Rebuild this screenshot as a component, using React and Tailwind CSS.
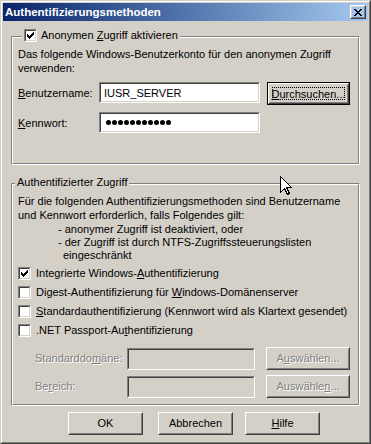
import React from "react";

function Check({ checked }) {
  return (
    <div className="w-[13px] h-[13px] shrink-0 border border-t-[#808080] border-l-[#808080] border-r-white border-b-white">
      <div className="w-full h-full border border-t-[#404040] border-l-[#404040] border-r-[#d4d0c8] border-b-[#d4d0c8] bg-white relative">
        {checked && (
          <svg width="7" height="7" viewBox="0 0 7 7" className="absolute left-[1px] top-[1px]" shapeRendering="crispEdges">
            <rect x="6" y="0" width="1" height="1" fill="#000" />
            <rect x="5" y="1" width="2" height="1" fill="#000" />
            <rect x="0" y="2" width="1" height="1" fill="#000" />
            <rect x="4" y="2" width="3" height="1" fill="#000" />
            <rect x="0" y="3" width="2" height="1" fill="#000" />
            <rect x="3" y="3" width="3" height="1" fill="#000" />
            <rect x="0" y="4" width="5" height="1" fill="#000" />
            <rect x="1" y="5" width="3" height="1" fill="#000" />
            <rect x="2" y="6" width="1" height="1" fill="#000" />
          </svg>
        )}
      </div>
    </div>
  );
}

function Field({ className = "", disabled, children }) {
  return (
    <div className={"border border-t-[#808080] border-l-[#808080] border-r-white border-b-white " + className}>
      <div className={"w-full h-full border border-t-[#404040] border-l-[#404040] border-r-[#d4d0c8] border-b-[#d4d0c8] flex items-center pl-[3px] " + (disabled ? "bg-[#d4d0c8]" : "bg-white")}>
        {children}
      </div>
    </div>
  );
}

function Btn({ className = "", disabled, children }) {
  return (
    <div className={"border border-t-white border-l-white border-r-[#404040] border-b-[#404040] " + className}>
      <div className={"w-full h-full border border-t-[#d4d0c8] border-l-[#d4d0c8] border-r-[#808080] border-b-[#808080] flex items-center justify-center " + (disabled ? "text-[#808080] [text-shadow:1px_1px_0_#fff]" : "")}>
        {children}
      </div>
    </div>
  );
}

function DefBtn({ className = "", children }) {
  return (
    <div className={"border border-black " + className}>
      <div className="w-full h-full border border-t-white border-l-white border-r-[#404040] border-b-[#404040]">
        <div className="w-full h-full border border-t-[#d4d0c8] border-l-[#d4d0c8] border-r-[#808080] border-b-[#808080] p-[2px]">
          <div className="w-full h-full border border-dotted border-black flex items-center justify-center">
            {children}
          </div>
        </div>
      </div>
    </div>
  );
}

function Group({ className = "", label, labelClass = "", children }) {
  return (
    <div className={"relative border border-t-[#808080] border-l-[#808080] border-r-white border-b-white " + className}>
      <div className="w-full h-full border border-t-white border-l-white border-r-[#808080] border-b-[#808080]">
        {children}
      </div>
      <div className={"absolute top-[-8px] h-[13px] bg-[#d4d0c8] flex items-center " + labelClass}>{label}</div>
    </div>
  );
}

function CheckRow({ checked, children, className = "" }) {
  return (
    <div className={"flex items-center h-[13px] " + className}>
      <Check checked={checked} />
      <span className="ml-[5px] whitespace-nowrap">{children}</span>
    </div>
  );
}

function Cursor() {
  return (
    <svg width="12" height="19" viewBox="0 0 12 19" className="absolute left-[280px] top-[176px]" shapeRendering="crispEdges">
      <path d="M0.5 0.5 L0.5 16.5 L4.5 12.5 L7.5 18.5 L9.5 17.5 L6.5 11.5 L11.5 11.5 Z" fill="#fff" stroke="#000" strokeWidth="1" />
    </svg>
  );
}

export default function App() {
  return (
    <div className="w-[371px] h-[444px] bg-[#d4d0c8] relative font-['Liberation_Sans',Arial,sans-serif] text-[11px] text-black leading-[13px] select-none">
      <div className="w-full h-full border border-t-[#d4d0c8] border-l-[#d4d0c8] border-r-[#404040] border-b-[#404040]">
        <div className="w-full h-full border border-t-white border-l-white border-r-[#808080] border-b-[#808080] p-px flex flex-col">
          {/* Title bar */}
          <div className="h-[18px] shrink-0 bg-linear-to-r from-[#0a246a] to-[#a6caf0] flex items-center justify-between pl-[2px] pr-[2px]">
            <span className="text-white font-bold text-[11.5px]">Authentifizierungsmethoden</span>
            <Btn className="w-[16px] h-[14px]">
              <svg width="8" height="7" viewBox="0 0 8 7" shapeRendering="crispEdges">
                <path d="M0 0h2v1h-2z M6 0h2v1h-2z M1 1h2v1h-2z M5 1h2v1h-2z M2 2h4v1h-4z M3 3h2v1h-2z M2 4h4v1h-4z M1 5h2v1h-2z M5 5h2v1h-2z M0 6h2v1h-2z M6 6h2v1h-2z" fill="#000" />
              </svg>
            </Btn>
          </div>

          <div className="px-[8px] pt-[15px] flex flex-col">
            {/* Group 1 */}
            <Group
              className="h-[129px]"
              labelClass="left-[10px] px-[2px]"
              label={
                <>
                  <Check checked />
                  <span className="ml-[4px] whitespace-nowrap">Anonymen <u>Z</u>ugriff aktivieren</span>
                </>
              }
            >
              <div className="pl-[5px] pt-[9px] leading-[14px]">
                <p>Das folgende Windows-Benutzerkonto für den anonymen Zugriff<br />verwenden:</p>
                <div className="flex items-start mt-[7px]">
                  <span className="w-[81px] h-[21px] flex items-center"><u>B</u>enutzername:</span>
                  <Field className="w-[161px] h-[21px]">IUSR_SERVER</Field>
                  <DefBtn className="ml-[7px] w-[83px] h-[23px]"><span><u>D</u>urchsuchen...</span></DefBtn>
                </div>
                <div className="flex items-start mt-[7px]">
                  <span className="w-[81px] h-[21px] flex items-center"><u>K</u>ennwort:</span>
                  <Field className="w-[161px] h-[21px]">
                    <div className="flex gap-[1px] pl-[2px]">
                      {Array.from({ length: 11 }).map((_, i) => (
                        <div key={i} className="w-[5px] h-[5px] rounded-full bg-black" />
                      ))}
                    </div>
                  </Field>
                </div>
              </div>
            </Group>

            {/* Group 2 */}
            <Group
              className="h-[223px] mt-[18px]"
              labelClass="left-[3px] px-[2px]"
              label={<span className="whitespace-nowrap">Authentifizierter Zugriff</span>}
            >
              <div className="pl-[5px] pt-[9px]">
                <p className="leading-[14px]">Für die folgenden Authentifizierungsmethoden sind Benutzername<br />und Kennwort erforderlich, falls Folgendes gilt:</p>
                <div className="pl-[40px] leading-[13px] mt-[1px]">
                  <p>- anonymer Zugriff ist deaktiviert, oder</p>
                  <p>- der Zugriff ist durch NTFS-Zugriffssteuerungslisten</p>
                  <p className="pl-[5px]">eingeschränkt</p>
                </div>
                <div className="flex flex-col gap-[6px] mt-[5px]">
                  <CheckRow checked>Integrierte Windows-<u>A</u>uthentifizierung</CheckRow>
                  <CheckRow>Digest-Authentifizierung für <u>W</u>indows-Domänenserver</CheckRow>
                  <CheckRow><u>S</u>tandardauthentifizierung (Kennwort wird als Klartext gesendet)</CheckRow>
                  <CheckRow>.NET Passport-Au<u>t</u>hentifizierung</CheckRow>
                </div>
                <div className="flex items-center mt-[10px] pl-[17px]">
                  <span className="w-[92px] text-[#808080] [text-shadow:1px_1px_0_#fff]">Standarddo<u>m</u>äne:</span>
                  <Field disabled className="w-[128px] h-[22px]" />
                  <Btn disabled className="ml-[11px] w-[84px] h-[23px]"><span>A<u>u</u>swählen...</span></Btn>
                </div>
                <div className="flex items-center mt-[5px] pl-[17px]">
                  <span className="w-[92px] text-[#808080] [text-shadow:1px_1px_0_#fff]">Be<u>r</u>eich:</span>
                  <Field disabled className="w-[128px] h-[22px]" />
                  <Btn disabled className="ml-[11px] w-[84px] h-[23px]"><span>Auswähle<u>n</u>...</span></Btn>
                </div>
              </div>
            </Group>

            {/* Bottom buttons */}
            <div className="flex mt-[6px] pl-[57px]">
              <Btn className="w-[75px] h-[23px]">OK</Btn>
              <Btn className="ml-[15px] w-[75px] h-[23px]">Abbrechen</Btn>
              <Btn className="ml-[12px] w-[75px] h-[23px]"><span><u>H</u>ilfe</span></Btn>
            </div>
          </div>
        </div>
      </div>
      <Cursor />
    </div>
  );
}
